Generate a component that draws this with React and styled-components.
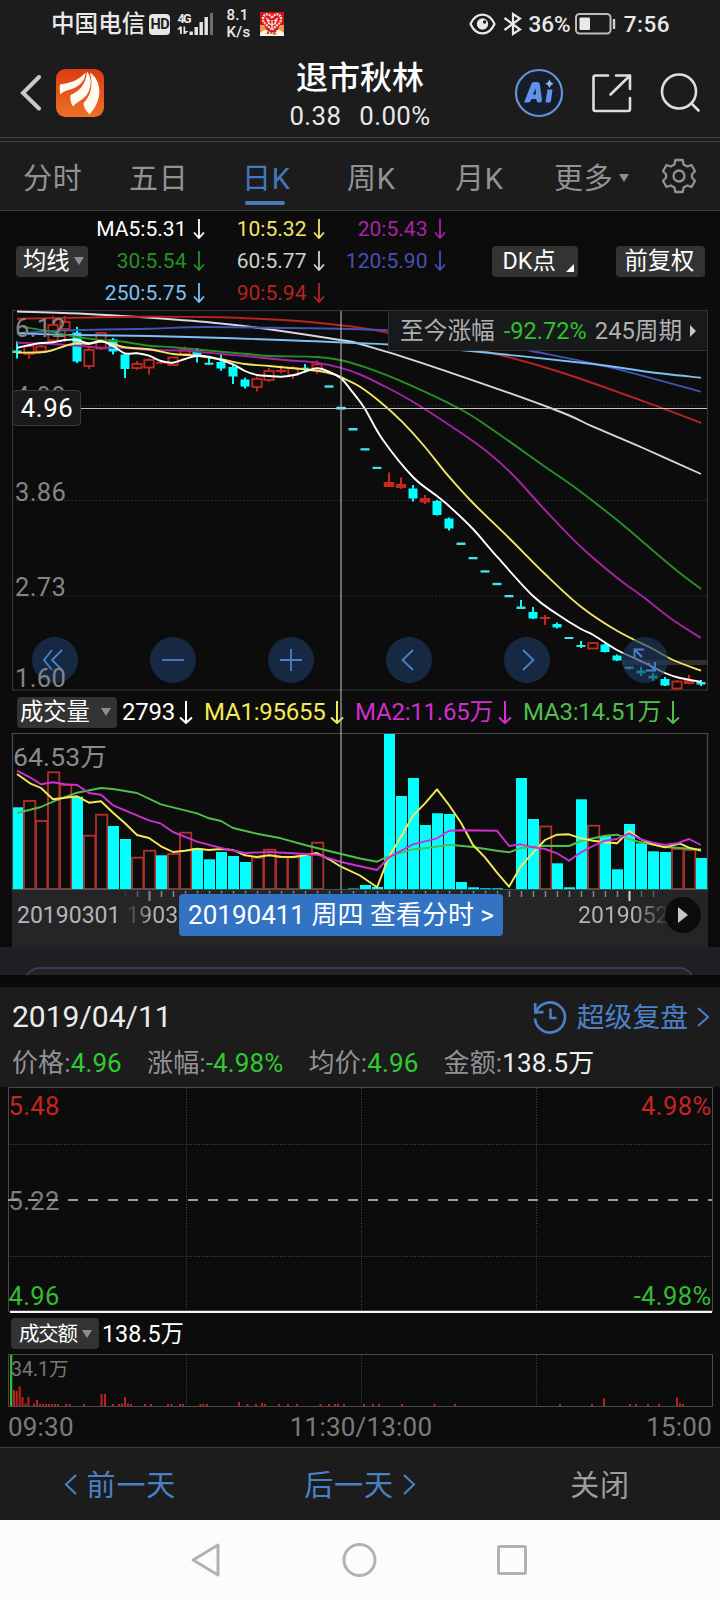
import React from "react";
import styled, { createGlobalStyle } from "styled-components";

const Global = createGlobalStyle`
  * { box-sizing: border-box; }
  body { margin: 0; background: #0c0c0c; }
  #root { width: 720px; }
  svg { display: block; flex: none; }
`;

const BLUE = "#4a80c6";
const GREY = "#929296";

const Page = styled.div`
  width: 720px;
  height: 1600px;
  display: flex;
  flex-direction: column;
  overflow: hidden;
  background: #0c0c0c;
  color: #fff;
  font-family: Roboto, "Noto Sans CJK SC", sans-serif;
  white-space: nowrap;
`;

const StatusBar = styled.div`
  height: 48px;
  padding: 0 50px 0 51px;
  display: flex;
  align-items: center;
  background: #1c1c1c;
  color: #e9e9e9;
`;
const Carrier = styled.span`
  font-size: 23.6px;
  line-height: 30px;
  font-weight: 500;
`;
const HdBadge = styled.span`
  width: 21px;
  height: 21px;
  margin-left: 4px;
  border-radius: 4px;
  background: #e6e6e6;
  color: #1c1c1c;
  font-size: 14.5px;
  line-height: 21.5px;
  font-weight: 700;
  letter-spacing: -0.5px;
  text-align: center;
`;
const Speed = styled.div`
  width: 34px;
  margin-left: 12px;
  font-size: 15px;
  line-height: 17.5px;
  font-weight: 500;
  letter-spacing: 0.4px;
`;
const StatusRight = styled.div`
  margin-left: auto;
  display: flex;
  align-items: center;
  font-size: 22.5px;
  line-height: 28px;
  font-weight: 500;
`;
const Clock = styled.span`
  margin-left: 7px;
  letter-spacing: 0.5px;
`;

const Header = styled.header`
  height: 90px;
  padding: 0 16px 0 20px;
  display: grid;
  grid-template-columns: 210px 1fr 214px;
  background: #1c1c1c;
  border-bottom: 1px solid #414141;
`;
const HeaderLeft = styled.div`
  padding-top: 21px;
  display: flex;
  gap: 14px;
`;
const HeaderRight = styled.div`
  padding-top: 20px;
  display: flex;
  justify-content: flex-end;
`;
const Titles = styled.div`
  padding-top: 12px;
  text-align: center;
`;
const Title = styled.div`
  font-size: 32px;
  line-height: 36px;
  font-weight: 500;
`;
const Quote = styled.div`
  margin-top: 2px;
  display: flex;
  justify-content: center;
  gap: 18px;
  color: #e8e8e8;
  font-size: 25.8px;
  line-height: 36px;
  letter-spacing: 0.4px;
`;

const Tabs = styled.nav`
  height: 73px;
  margin: 0;
  padding: 4px 0 0 23px;
  border-bottom: 1px solid #3c3c3c;
  display: grid;
  grid-template-columns: 106px 113px 105px 108px 99px 107px 40px;
  align-items: stretch;
  background: linear-gradient(#1c1c1c 3px, #414141 3px, #414141 4px, #1c1c1c 4px);
`;
const Tab = styled.div`
  display: flex;
  align-items: flex-start;
  flex-direction: column;
  padding-top: 20px;
  color: ${(p) => (p.$active ? "#4378bd" : GREY)};
  font-size: 29px;
  line-height: 34px;
  letter-spacing: 0.8px;
`;
const TabUnderline = styled.i`
  width: 40px;
  height: 4px;
  margin: 5px 0 0 3px;
  border-radius: 2px;
  background: #4a7ab8;
`;
const MoreTab = styled(Tab)`
  flex-direction: row;
  gap: 5px;
`;
const Caret = styled.i`
  width: 0;
  height: 0;
  flex: none;
  border-left: ${(p) => p.$size || 5}px solid transparent;
  border-right: ${(p) => p.$size || 5}px solid transparent;
  border-top: ${(p) => (p.$size || 5) * 1.7}px solid #8f8f92;
`;

const MaPanel = styled.div`
  height: 99px;
  padding: 1px 15px 0 16px;
  display: flex;
  align-items: center;
`;
const Pill = styled.div`
  width: ${(p) => p.$w}px;
  height: 31px;
  padding-left: ${(p) => p.$pad || 7}px;
  border-radius: 4px;
  display: flex;
  align-items: center;
  gap: ${(p) => p.$gap || 4}px;
  background: #333334;
  font-size: ${(p) => p.$fs || 23.3}px;
  line-height: 30px;
  letter-spacing: ${(p) => p.$ls || 0}px;
`;
const MaButton = styled(Pill)`
  margin: 0 ${(p) => p.$mr || 0}px 0 ${(p) => p.$ml || 0}px;
`;
const CornerMark = styled.i`
  width: 0;
  height: 0;
  align-self: flex-end;
  margin-bottom: 5px;
  border-left: 8px solid transparent;
  border-bottom: 8px solid #fff;
`;
const MaGrid = styled.div`
  display: grid;
  grid-template-columns: 116.5px 120px 121px;
  grid-auto-rows: 32px;
`;
const MaItem = styled.span`
  display: flex;
  align-items: center;
  justify-content: flex-end;
  gap: 6px;
  color: ${(p) => p.$c};
  font-size: 21px;
  letter-spacing: 0.03px;
`;

const ChartStack = styled.section`
  position: relative;
  display: flex;
  flex-direction: column;
`;
const PriceArea = styled.div`
  position: relative;
  height: 381px;
`;
const AxisText = styled.text`
  font-family: Roboto, "Noto Sans CJK SC", sans-serif;
  font-size: ${(p) => p.$fs || 25.5}px;
  letter-spacing: ${(p) => (p.$ls === undefined ? 0.4 : p.$ls)}px;
  fill: ${(p) => p.$c || "#858585"};
`;
const PriceTag = styled.div`
  position: absolute;
  left: 12px;
  top: 80px;
  width: 69px;
  height: 36px;
  border: 1px solid #3b3b3b;
  border-radius: 4px;
  background: #1a1a1b;
  font-size: 25.8px;
  line-height: 35px;
  letter-spacing: 0.6px;
  text-indent: 1px;
  text-align: center;
`;
const SinceBar = styled.div`
  position: absolute;
  right: 12px;
  top: 0;
  width: 320px;
  height: 41px;
  padding: 0 10px 0 11px;
  border: 1px solid #303134;
  display: flex;
  align-items: center;
  background: #18191b;
  color: #b0b0b0;
  font-size: 23.7px;
  line-height: 38px;
`;
const SinceValue = styled.span`
  margin: 0 8px 0 9px;
  color: #31c02f;
  font-size: 23.6px;
`;
const PlayTriangle = styled.i`
  width: 0;
  height: 0;
  margin-left: ${(p) => p.$ml || 0}px;
  border-top: ${(p) => p.$h / 2}px solid transparent;
  border-bottom: ${(p) => p.$h / 2}px solid transparent;
  border-left: ${(p) => p.$w}px solid #c8c8c8;
`;
const Controls = styled.div`
  position: absolute;
  left: 32px;
  right: 51.5px;
  top: 327px;
  display: flex;
  justify-content: space-between;
`;
const RoundButton = styled.div`
  width: 46px;
  height: 46px;
  border-radius: 50%;
  background: rgba(29, 57, 95, 0.65);
`;
const OverLabel = styled.span`
  position: absolute;
  left: 15px;
  top: 360px;
  font-size: 25.5px;
  line-height: 16px;
  letter-spacing: 0.4px;
  color: #858585;
`;
const Crosshair = styled.div`
  position: absolute;
  left: 340px;
  top: 1px;
  width: 2px;
  height: 580px;
  background: rgba(170, 170, 170, 0.6);
`;

const VolumeLegend = styled.div`
  height: 42px;
  padding: 0 0 0 17px;
  display: flex;
  align-items: center;
`;
const LegendValue = styled.span`
  width: ${(p) => p.$w}px;
  margin-left: ${(p) => p.$ml}px;
  display: flex;
  align-items: center;
  justify-content: space-between;
  color: ${(p) => p.$c};
  font-size: 24px;
  line-height: 34px;
  letter-spacing: -0.22px;
`;

const Timeline = styled.div`
  position: relative;
  height: 57px;
  margin: 0 12px;
  background: #252527;
`;
const TimelineDates = styled.div`
  height: 48px;
  padding: 0 6px 0 5px;
  display: flex;
  align-items: center;
  color: #b5b5b5;
  font-size: 23px;
  margin-top: -11px;
`;
const FadedDate = styled.span`
  margin-left: ${(p) => p.$ml}px;
  background: linear-gradient(${(p) => p.$dir}, #b5b5b5 60%, #2c2c2e 100%);
  background-clip: text;
  -webkit-background-clip: text;
  color: transparent;
`;
const PlayButton = styled.div`
  width: 36px;
  height: 36px;
  margin-left: -3.5px;
  flex: none;
  position: relative;
  border-radius: 50%;
  background: #0c0c0c;
  display: flex;
  align-items: center;
  justify-content: center;
`;
const DateTip = styled.div`
  position: absolute;
  left: 167px;
  top: 4px;
  width: 324px;
  height: 42px;
  border-radius: 4px;
  background: #3273c4;
  font-size: 26px;
  line-height: 43px;
  text-align: center;
`;

const Peek = styled.div`
  height: 40px;
  padding: 20px 25px 0 24px;
  border-bottom: 12px solid #0a0a0a;
  overflow: hidden;
  background: #1f1f24;
`;
const PeekCard = styled.div`
  height: 40px;
  border: 2px solid #3a3b56;
  border-radius: 16px;
  background: #222327;
`;

const DayHead = styled.div`
  height: 100px;
  padding: 9px 11px 0 12px;
  background: #1c1c1c;
`;
const DayTop = styled.div`
  height: 41px;
  display: flex;
  align-items: center;
  color: #ececec;
  font-size: 30px;
`;
const Replay = styled.div`
  margin: 1px 0 0 auto;
  display: flex;
  align-items: center;
  color: ${BLUE};
  font-size: 27.8px;
  line-height: 36px;
`;
const ReplayText = styled.span`
  margin: 1px 9px 0 10px;
`;
const Stats = styled.div`
  height: 51px;
  display: flex;
  align-items: center;
  gap: 25.2px;
  color: ${GREY};
  font-size: 26px;
  line-height: 38px;
  letter-spacing: 0.12px;
`;
const StatValue = styled.span`
  color: ${(p) => p.$c};
`;
const AmountLegend = styled.div`
  height: 41px;
  padding: 0 11px;
  display: flex;
  align-items: center;
  gap: 3px;
  font-size: 23.3px;
`;
const AmountTotal = styled.span`
  margin-top: -4px;
`;
const Times = styled.div`
  height: 39px;
  padding: 0 8px 2px 8px;
  display: grid;
  grid-template-columns: 1fr 1fr 1fr;
  align-items: center;
  color: #7b7b7b;
  font-size: 26px;
  letter-spacing: 0.2px;
  & > :nth-child(2) { text-align: center; text-indent: 2px; }
  & > :nth-child(3) { text-align: right; }
`;
const Footer = styled.footer`
  height: 73px;
  padding: 3px 90px 0 65px;
  border-top: 1px solid #3c3c3c;
  display: flex;
  align-items: center;
  background: #1c1c1c;
  color: ${BLUE};
  font-size: 29px;
  line-height: 40px;
  letter-spacing: 0.9px;
`;
const DayLink = styled.span`
  margin-right: ${(p) => p.$mr || 0}px;
  display: flex;
  align-items: center;
  gap: 9.5px;
  & svg { margin-bottom: 3px; }
`;
const CloseLink = styled.span`
  margin-left: auto;
  color: #9d9d9f;
`;
const NavBar = styled.div`
  height: 80px;
  padding: 0 192px 0 191px;
  display: flex;
  align-items: center;
  justify-content: space-between;
  background: #fcfcfc;
`;

const Down = ({ h = 20, w = 12, sw = 1.8 }) => (
  <svg width={w} height={h} viewBox={`0 0 ${w} ${h}`} fill="none" stroke="currentColor" strokeWidth={sw}>
    <path d={`M${w / 2} 0V${h - 1}M1 ${h - 6.5}L${w / 2} ${h - 1}L${w - 1} ${h - 6.5}`} />
  </svg>
);
const Chevron = ({ left, w = 12, h = 21, sw = 2 }) => (
  <svg width={w} height={h} viewBox={`0 0 ${w} ${h}`} fill="none" stroke="currentColor" strokeWidth={sw}>
    <path d={left ? `M${w - 1} 1L1 ${h / 2}L${w - 1} ${h - 1}` : `M1 1L${w - 1} ${h / 2}L1 ${h - 1}`} />
  </svg>
);

const Signal = () => (
  <svg width="25" height="24" viewBox="0 0 25 24" fill="#e6e6e6">
    <rect x="0.5" y="19.5" width="3.4" height="3.5" />
    <rect x="5.5" y="15" width="3.4" height="8" />
    <rect x="10.5" y="10" width="3.4" height="13" />
    <rect x="15.5" y="5" width="3.4" height="18" />
    <rect x="21" y="1" width="3" height="22" fill="#6e6e6e" />
  </svg>
);
const CellBox = styled.div`
  width: 37px;
  height: 24px;
  margin-left: 7px;
  display: flex;
  align-items: flex-start;
`;
const CellText = styled.div`
  width: 12px;
  font-size: 12.5px;
  line-height: 13px;
  font-weight: 700;
  letter-spacing: -1.5px;
`;

const FestivalIcon = () => (
  <svg width="24" height="24" viewBox="0 0 24 24">
    <rect width="24" height="24" fill="#d4141c" />
    <path d="M0 15L5 17L12 21L19 17L24 15V24H0Z" fill="#fff3e4" />
    <path d="M0 13L4 13L6 17L0 21ZM24 13L20 13L18 17L24 21Z" fill="#ef9a45" />
    <path d="M12 6C10 1 3 1 3 7c0 5 6 7 9 11c3-4 9-6 9-11c0-6-7-6-9-1Z" fill="none" stroke="#fbd9d3" strokeWidth="2.4" strokeDasharray="2 .8" />
    <path d="M6 6l4 3M18 6l-4 3M8 11l4 2l4-2M12 8v8M7 8l2 3M17 8l-2 3" stroke="#fbd9d3" strokeWidth="1.4" />
    <path d="M7 22l1.5-3v3M11 19v3M13.5 19.5h2l-2 2.5h3" stroke="#a34b2a" strokeWidth="1.2" fill="none" />
  </svg>
);
const EyeIcon = () => (
  <svg width="27" height="22" viewBox="0 0 27 22" fill="none" stroke="#e9e9e9" strokeWidth="2.2">
    <path d="M1.5 11C7 -1.5 20 -1.5 25.5 11C20 23.5 7 23.5 1.5 11Z" />
    <circle cx="13.5" cy="11" r="5.7" fill="#e9e9e9" stroke="none" />
    <circle cx="15.6" cy="9" r="1.7" fill="#1c1c1c" stroke="none" />
  </svg>
);
const BluetoothIcon = () => (
  <svg width="20" height="24" viewBox="0 0 20 24" fill="none" stroke="#e9e9e9" strokeWidth="2.2">
    <path d="M1.5 6L17 17.5L10 22V2L17 6.5L1.5 18" />
  </svg>
);
const BatteryIcon = () => (
  <svg width="42" height="22" viewBox="0 0 42 22" fill="none">
    <rect x="1" y="1" width="34.5" height="19.5" rx="3.5" stroke="#bdbdbd" strokeWidth="2" />
    <rect x="4.5" y="4.5" width="10.5" height="12.5" rx="1" fill="#e9e9e9" />
    <path d="M39 6V16" stroke="#d0d0d0" strokeWidth="2.4" />
  </svg>
);
const BackIcon = () => (
  <svg width="22" height="48" viewBox="0 0 22 48" fill="none" stroke="#cacaca" strokeWidth="4" strokeLinecap="round">
    <path d="M19 8L3 24L19 39.5" />
  </svg>
);
const BrandIcon = () => (
  <svg width="48" height="48" viewBox="0 0 48 48">
    <defs>
      <linearGradient id="brand" x1="0" y1="0" x2="0" y2="1">
        <stop offset="0" stopColor="#de3c12" />
        <stop offset="1" stopColor="#ec7125" />
      </linearGradient>
    </defs>
    <rect width="48" height="48" rx="9.5" fill="url(#brand)" />
    <g fill="#fff9f0">
      <path d="M4 15.5C13 14.5 23 11.5 29.5 3.5C29.5 12 23 18 14 20.5C9.5 21.7 6.5 23 4.5 25.5C3.5 22 3.5 19 4 15.5Z" />
      <path d="M14.5 26C23.5 22.5 30 15 31 2.5C36.5 9 35.5 19 31 25.5C27 31 21 32.5 17 37.5C14.5 34 14 30 14.5 26Z" />
      <path d="M27.5 34C34.5 27 37.5 17 34 3.5C42 9 44.5 19 43 27C41.5 35 37.5 41 33.5 45.5C30 42 27.5 38 27.5 34Z" />
    </g>
  </svg>
);
const AiIcon = () => (
  <svg width="50" height="50" viewBox="0 0 50 50">
    <circle cx="25" cy="25" r="23" fill="#161c28" stroke="#6791d8" strokeWidth="2.2" />
    <path fillRule="evenodd" fill="#5f92ea" d="M10 34.5L17.5 15.5Q18.2 14 20 14H23Q25.5 14 25.8 16L28 32Q28.2 34.5 26 34.5H24.5Q22.8 34.5 22.6 32.8L22.3 31H17.5L16.7 32.8Q16 34.5 14 34.5ZM19 26.5H22L21.5 20.5Z" />
    <path fill="#5f92ea" d="M33.5 21.5H38.5L37 33Q36.8 34.5 35 34.5H31.5Z" />
    <path fill="#8fb4f2" d="M35.5 11.5Q36.5 15 39.5 15.8Q36.5 16.6 35.5 20Q34.5 16.6 31.5 15.8Q34.5 15 35.5 11.5Z" />
  </svg>
);
const ShareIcon = () => (
  <svg width="50" height="50" viewBox="0 0 50 50" fill="none" stroke="#dedede" strokeWidth="2.6" strokeLinecap="round" strokeLinejoin="round">
    <path d="M22 7.5H9.5Q7.5 7.5 7.5 9.5V41Q7.5 43 9.5 43H42Q44 43 44 41V30M30 7.5H44V21M44 7.5L24.5 26.5" />
  </svg>
);
const SearchIcon = () => (
  <svg width="50" height="50" viewBox="0 0 50 50" fill="none" stroke="#dedede" strokeWidth="2.6" strokeLinecap="round">
    <circle cx="25" cy="23.5" r="17" />
    <path d="M37.5 35.5L44.5 42.5" />
  </svg>
);
const GearIcon = () => (
  <svg width="36" height="36" viewBox="0 0 36 36" fill="none" stroke={GREY} strokeWidth="2.3" strokeLinejoin="round">
    <path d="M14.3 2H21.7L22.6 6.5L26.2 8.5L30.5 7L34 13.3L31 16.3V19.7L34 22.7L30.5 29L26.2 27.5L22.6 29.5L21.7 34H14.3L13.4 29.5L9.8 27.5L5.5 29L2 22.7L5 19.7V16.3L2 13.3L5.5 7L9.8 8.5L13.4 6.5Z" />
    <circle cx="18" cy="18" r="5.5" />
  </svg>
);
const GearSlot = styled.div`
  padding-top: 16px;
`;
const CaretSlot = styled.span`
  height: 34px;
  display: flex;
  align-items: center;
  padding-bottom: 3px;
`;
const IconGap = styled.span`
  width: ${(p) => p.$w}px;
  flex: none;
`;
const HistoryIcon = () => (
  <svg width="34" height="34" viewBox="0 0 34 34" fill="none" stroke={BLUE} strokeWidth="2.7">
    <path d="M2.5 13.5A15 15 0 1 1 2 18.5" />
    <path d="M2.2 3V12.2H10.5" />
    <path d="M17.5 8.5V18H23.5" strokeWidth="2.5" />
  </svg>
);

const CX = (i) => 17 + 12 * i;
// Candles: [colour, high, open/close top, open/close bottom, low, hollow]
const candles = [
  ["c", 341.5, 350.5, 353, 358.5], ["r", 346, 346, 354, 359, 1], ["r", 345, 346.5, 351.5, 353, 1], ["r", 316, 325, 340.5, 342, 1],
  ["r", 316, 322, 329, 342, 1], ["c", 326.7, 332.5, 361.5, 363], ["r", 346, 350, 366, 369, 1], ["r", 333, 333, 348.5, 350, 1],
  ["c", 338, 339.5, 351.5, 354.5], ["c", 353.5, 354.5, 369, 378], ["r", 361, 364, 368, 370, 1], ["r", 358, 360, 367.5, 374.5, 1],
  ["r", 360.5, 362, 363.5, 364], ["r", 357.5, 357.5, 365, 365, 1], ["r", 346.5, 350, 354, 356, 1], ["c", 348, 350.5, 356.5, 362.5],
  ["c", 357.5, 362.7, 364.7, 364.7], ["c", 352.7, 362, 368.5, 370.7], ["c", 364, 367, 376.5, 384], ["c", 377.7, 379.5, 386.5, 388.5],
  ["r", 376.5, 379, 387, 391.5, 1], ["r", 368, 371, 380, 382, 1], ["r", 365.5, 370, 372, 373.5], ["r", 366, 368, 375, 379, 1],
  ["c", 364, 367.7, 370, 372.5], ["r", 360.5, 364.5, 371, 374, 1], ["c", 385.3, 385.3, 387.7, 387.7], ["c", 407, 407, 409.5, 409.5],
  ["c", 428, 428, 430.5, 430.5], ["c", 448.2, 448.2, 450.5, 450.5], ["c", 466.8, 466.8, 469, 469], ["r", 472.5, 482, 487, 487],
  ["r", 477.5, 484, 488, 489], ["c", 485, 488.5, 498.5, 501.5], ["r", 495, 498, 502.5, 504], ["c", 500, 501, 515, 515.5],
  ["c", 517.5, 518.5, 528.5, 530.5], ["c", 542.5, 542.5, 545, 545], ["c", 557, 557, 559.3, 559.3], ["c", 570.3, 570.3, 572.6, 572.6],
  ["c", 582.8, 582.8, 585.2, 585.2], ["c", 595, 595, 597.3, 597.3], ["c", 600, 606.5, 609, 609], ["c", 607, 612, 618.5, 619],
  ["r", 615, 617, 619, 625], ["c", 622.5, 624, 627.5, 628.5], ["c", 637, 637, 639, 639], ["c", 641, 645, 647, 648],
  ["r", 642, 643, 648.5, 649, 1], ["c", 643.5, 644.5, 652, 652.5], ["c", 654.5, 655.5, 660.5, 661], ["c", 666, 666.5, 669, 669.5],
  ["c", 666.5, 670.5, 673.5, 676], ["c", 673, 675.5, 678.5, 680.5], ["c", 677, 679, 685.5, 686], ["r", 680, 681.5, 688.5, 690, 1],
  ["r", 675, 680, 684, 684], ["c", 680, 682, 684.5, 686],
];
const maLines = [
  ["#d8d8d8", "17,311.5 83,313.7 143,317.3 213,322.7 260,328 340,340 360,344 423,363.3 553,409 593,426.7 643,448 701,474"],
  ["#b82320", "17,318.7 77,317.7 143,316.7 220,317.3 283,320 320,323 360,327.7 388,332.7 483,351 560,372 660,407.3 701,423"],
  ["#4452b4", "17,333 77,330 150,328.7 205,327 290,328 360,329.3 430,333 480,340 527,350 607,366.7 701,391.7"],
  ["#7cc0f4", "17,333.3 77,335 150,336 233,338.3 300,340.7 360,343.3 388,344.5 463,350.3 593,364 647,371.7 701,377.7"],
  ["#269029", "23,327 53,332 77,337 101,340 125,342 149,345.7 173,347.3 221,351.7 247,354 269,356 317,357 340,360 360,365.5 400,380.7 460,409 490,428 545,466.7 577,489 617,520 643,542 677,570.7 701,589"],
  ["#a723a6", "17,342.7 53,344 77,345.7 101,347.7 125,348 149,350 185,350.7 221,354 245,356 269,358.5 293,360.7 317,362.7 340,367.7 360,374.5 385,386.5 410,400 450,425.5 485,450 513,475 545,510 581,547 617,577.7 643,596.7 670,618 701,638"],
  ["#f5e565", "17,352.7 41,352.3 53,350 65,346 77,343.3 89,344 101,341.7 113,344 125,347.3 149,349.3 173,354 197,355.7 221,359.3 245,364 269,366 293,368.3 317,370.7 333,374 347,380 360,386.7 380,401.7 402,421.7 425,447 449,476.7 473,503 509,538 545,574 581,606.7 617,630.7 653,649 673,660 701,670.7"],
  ["#ffffff", "17,347.7 30,345 41,343 53,342.3 65,340 77,340 89,343.3 101,341 113,346 125,353.3 137,353.3 149,355.7 161,361 173,362.7 185,359 197,355.7 209,356.7 221,360 233,364.3 245,371 257,375 269,376 281,376.7 293,375.3 305,371.7 317,368.3 329,371.7 341,378.3 353,392.7 365,409 383,440 413,477 437,496 449,506 473,529 497,556.7 533,596 557,614 581,629 593,634.7 617,650 643,662 665,673 680,678 701,681.7"],
];

// Catmull-Rom curve through a "x,y x,y ..." list
const smooth = (pts) => {
  const p = pts.split(" ").map((s) => s.split(",").map(Number));
  const r = (v) => Math.round(v * 10) / 10;
  return p.slice(1).reduce((d, b, k) => {
    const a = p[k];
    const before = p[k - 1] || a;
    const after = p[k + 2] || b;
    const c1 = [a[0] + (b[0] - before[0]) / 6, a[1] + (b[1] - before[1]) / 6];
    const c2 = [b[0] - (after[0] - a[0]) / 6, b[1] - (after[1] - a[1]) / 6];
    return `${d}C${r(c1[0])} ${r(c1[1])} ${r(c2[0])} ${r(c2[1])} ${b[0]} ${b[1]}`;
  }, `M${p[0][0]} ${p[0][1]}`);
};

// Volume bars: [colour, top y]
const volumes = "c807.3 r801 r821 r772.3 r785 c796.7 r835.7 r814.7 c826 c839 r857.7 r850.7 c855.3 r854 r832.7 c848.3 c859.3 c852 c856 c862 r857.7 r849.7 r857.3 r857.3 c856 r842.7 n889 c889 c888.5 c885 c887 c734 c796 c778 c825 c813.3 c814 c882 c887.3 c888.3 c888.3 c889 c778 c819 r826.5 c863.3 c887.3 c799.3 r825.7 c836 c869.3 c824 c843.3 c851.3 c852 r849 r850 c858"
  .split(" ")
  .map((s) => [s[0], Number(s.slice(1))]);
const volLines = [
  ["#4fbf4c", "17,813 41,807 53,801.7 77,792.7 101,788 113,789 137,793 161,804.3 197,813.3 209,818.3 221,821 233,828 257,833.7 281,838.3 305,845 329,851 360,858.5 377,861.7 389,856 413,849.3 425,848.3 449,844.7 473,847 497,850.7 509,852.3 521,848 545,845.7 569,846 581,841 605,835.7 617,834.7 629,839 641,842.3 665,847 701,849.5"],
  ["#f6e956", "17,774 30,783.3 41,788 53,799.3 65,797.7 77,796.3 89,802.7 101,801.3 113,812.7 125,823.3 137,835 149,838 161,846.3 173,852 185,850.7 197,848.7 209,850 221,849 233,850 245,855.3 257,857 269,855.3 281,856.7 293,857 305,855.3 317,853 329,859.3 341,866.7 360,875.5 377,887.3 389,856.7 401,836.7 413,815.7 425,803.3 437,789.3 449,805 461,822.7 473,845 485,857.3 497,872.7 509,886.7 521,866 533,852.7 545,840 557,834.7 569,834.3 581,838.3 593,840.7 605,842.3 617,843.3 629,831 641,839.3 653,844.3 665,847.3 680,843.7 689,847.7 701,850.7"],
  ["#cf2fce", "17,770.7 30,777.3 41,784.3 53,782.3 65,784.3 77,785 89,793 101,794.7 113,805.3 125,810.3 137,815.3 149,820.3 161,823.7 173,832 197,841.7 221,848 245,853 269,852 293,853.3 317,854.7 341,862 360,866.3 377,870 389,857.3 413,844.3 437,838.3 449,830.7 461,830.3 497,830.7 509,846 521,844.3 533,847.3 545,849 557,853.3 569,860.7 581,852.3 593,846 605,840.7 617,839 629,833.3 641,839.3 653,842.7 665,845 677,843.3 689,839 701,845"],
];

// Intraday amount bars: [x, height]
const amounts = [
  [14, 16], [16.7, 15], [19.7, 19.5], [22.5, 9], [25.5, 2.5], [28.5, 9], [34, 2.5], [37, 6], [40, 2], [43, 2], [46, 2], [49, 2], [52, 2], [55, 2], [58, 2],
  [66, 2], [69.5, 2], [84, 2], [101.5, 12], [105, 12], [113, 2], [119, 2], [122, 2.5], [125, 9], [128, 2.5], [131, 2], [145, 2], [151, 2], [168, 2], [171.5, 2],
  [180, 2], [183, 2], [200.5, 2], [203.5, 2], [207, 2], [239, 4], [247.5, 2], [256, 2], [262, 3], [265, 2], [279, 2], [288, 2], [297, 2], [320.5, 2], [329, 2],
  [335, 2], [338, 2], [344, 2], [364, 2], [373, 2], [379, 2], [402, 2], [434.5, 2], [455, 2], [560, 2], [592, 2], [604, 7.5], [630, 2], [636, 2], [648, 2], [659, 2],
  [677, 8.5], [680, 2.5], [683, 2],
];

const PriceChart = () => (
  <svg width="720" height="381" viewBox="0 310 720 381">
    <g stroke="#333" strokeDasharray="1.5 2">
      <path d="M12 405.5H707M12 500.5H707M12 596H707" />
    </g>
    <rect x="12.5" y="310.5" width="695" height="379.5" fill="none" stroke="#333436" strokeWidth="1.2" />
    <path d="M622 662.5H707" stroke="#303030" strokeWidth="5" />
    {candles.map(([c, hi, top, bot, lo, hollow], i) => {
      const col = c === "c" ? "#00ffff" : "#c5281f";
      const dash = c === "c" && bot - top < 2.6;
      return (
        <g key={i} stroke={col} fill={dash ? "#3fe3e8" : col}>
          {hollow ? (
            <>
              <path d={`M${CX(i)} ${hi}V${top}M${CX(i)} ${bot}V${lo}`} strokeWidth="1.8" />
              <rect x={CX(i) - 4.7} y={top} width="9.4" height={bot - top} fill="none" strokeWidth="1.8" />
            </>
          ) : (
            <>
              {lo - hi > 2.6 && <path d={`M${CX(i)} ${hi}V${lo}`} strokeWidth="2" />}
              <rect x={CX(i) - (c === "c" ? 4.5 : 5.2)} y={top} width={c === "c" ? 9 : 10.5} height={bot - top} stroke="none" />
            </>
          )}
        </g>
      );
    })}
    {maLines.map(([c, pts]) => (
      <path key={c} d={smooth(pts)} fill="none" stroke={c} strokeWidth="1.9" strokeLinejoin="round" />
    ))}
    <path d="M80 408.5H707" stroke="#c4c4c4" strokeWidth="1.2" />
    <path d="M336.5 408H345.5" stroke="#6fe8ea" strokeWidth="2.4" />
    <AxisText x="15" y="337">6.12</AxisText>
    <AxisText x="15" y="405">4.99</AxisText>
    <AxisText x="15" y="501">3.86</AxisText>
    <AxisText x="15" y="596">2.73</AxisText>
  </svg>
);

const VolumeChart = () => (
  <svg width="720" height="157" viewBox="0 733 720 157">
    {volumes.map(([c, y], i) =>
      c === "c" ? (
        <rect key={i} x={i ? CX(i) - 5 : 13} y={y} width={i ? 11 : 10} height={889.5 - y} fill="#00ffff" />
      ) : c === "r" ? (
        <rect key={i} x={CX(i) - 5} y={y} width="11.3" height={889 - y} fill="none" stroke="#b0322d" strokeWidth="1.8" />
      ) : null
    )}
    <path d="M12.5 890V733.5H707.5V890" fill="none" stroke="#4c4c4e" strokeWidth="1.2" />
    <path d="M13 889.5H707" stroke="#2d5f60" strokeWidth="1" />
    {volLines.map(([c, pts]) => (
      <polyline key={c} points={pts} fill="none" stroke={c} strokeWidth="1.9" strokeLinejoin="round" />
    ))}
    <AxisText x="13" y="765.5" $fs={26.5} $ls={0.15} $c="#8a8a8a">64.53万</AxisText>
  </svg>
);

const Ticks = () => (
  <svg width="696" height="12" viewBox="12 890 696 12" stroke="#8a8a8a">
    {Array.from({ length: 45 }, (_, k) => 125 + 12 * k).map((x) => {
      const major = x === 149 || x === 629;
      return (
        <path
          key={x}
          d={`M${x + 0.5} 891V${major ? 901 : x > 175 && x < 505 ? 893.5 : 897}`}
          stroke={x === 629 ? "#d8d8d8" : undefined}
          strokeWidth={major ? 2 : 1.5}
          opacity={x === 125 ? 0.2 : x === 137 || x > 640 ? 0.6 : 1}
        />
      );
    })}
  </svg>
);

const IntradayChart = () => (
  <svg width="720" height="226" viewBox="0 1087 720 226">
    <g stroke="#4c4c4c" strokeDasharray="1 1.7">
      <path d="M10 1144.5H712M10 1256.5H712M186.5 1088V1310M361.5 1088V1310M536.5 1088V1310" />
    </g>
    <path d="M8.5 1312V1087.5H712.5V1312" fill="none" stroke="#4a4a4a" />
    <AxisText x="8.5" y="1210" $c="#7d7d7d">5.22</AxisText>
    <path d="M8 1200H712" stroke="#9b9b9b" strokeWidth="2" strokeDasharray="10 10" />
    <path d="M10 1311.8H712" stroke="#f4f4f0" strokeWidth="2.2" />
    <AxisText x="8.5" y="1115" $c="#c42520">5.48</AxisText>
    <AxisText x="8.5" y="1305" $c="#31bd33">4.96</AxisText>
    <AxisText x="711.5" y="1115" textAnchor="end" $c="#c42520">4.98%</AxisText>
    <AxisText x="711.5" y="1305" textAnchor="end" $c="#31bd33">-4.98%</AxisText>
  </svg>
);

const AmountChart = () => (
  <svg width="720" height="54" viewBox="0 1354 720 54">
    <path d="M186.5 1355V1406M361.5 1355V1406M536.5 1355V1406" stroke="#4c4c4c" strokeDasharray="1 1.7" />
    <rect x="8.5" y="1354.5" width="704" height="52" fill="none" stroke="#4a4a4a" />
    {amounts.map(([x, h]) => (
      <rect key={x} x={x - 1} y={1406 - h} width="2" height={h} fill="#bd211d" />
    ))}
    <rect x="10" y="1355" width="2.3" height="51" fill="#38b636" />
    <AxisText x="11" y="1376" $fs={19.5} $ls={0} $c="#797979">34.1万</AxisText>
  </svg>
);

const controlPaths = [
  "M20 13L12 23L20 33M30 13L20 23L30 33",
  "M12 23H34",
  "M12 23H34M23 12V34",
  "M27 13L16.5 23L27 33",
  "M19 13L29.5 23L19 33",
  "M22 12.5H12.5V21M12.5 12.5L20 20M24 33.5H33V25M33 33.5L26 26",
];

const legend = [
  ["#ffffff", "MA5:5.31"], ["#f5e565", "10:5.32"], ["#a723a6", "20:5.43"],
  ["#269029", "30:5.54"], ["#d0d0d0", "60:5.77"], ["#4452b4", "120:5.90"],
  ["#7cc0f4", "250:5.75"], ["#b82320", "90:5.94"],
];
const volumeLegend = [
  ["#ffffff", "2793", 71, 5], ["#f6e956", "MA1:95655", 140, 11],
  ["#cf2fce", "MA2:11.65万", 157, 11], ["#4fbf4c", "MA3:14.51万", 157, 11],
];
const stats = [
  ["价格", "4.96", "#31c933"], ["涨幅", "-4.98%", "#31c933"],
  ["均价", "4.96", "#31c933"], ["金额", "138.5万", "#f0f0f0"],
];

export default function App() {
  return (
    <Page>
      <Global />
      <StatusBar>
        <Carrier>中国电信</Carrier>
        <HdBadge>HD</HdBadge>
        <CellBox>
          <div>
            <CellText>4G</CellText>
            <svg width="12" height="10" viewBox="0 0 12 10" fill="#e6e6e6">
              <path d="M0 4.5L3 1.5H4.8V9H3V4.5ZM6.5 1.5H8.2V6H11.5L8 9H6.5Z" />
            </svg>
          </div>
          <Signal />
        </CellBox>
        <Speed>8.1<br />K/s</Speed>
        <FestivalIcon />
        <StatusRight>
          <EyeIcon />
          <IconGap $w={7} />
          <BluetoothIcon />
          <IconGap $w={6} />
          36%
          <IconGap $w={4} />
          <BatteryIcon />
          <Clock>7:56</Clock>
        </StatusRight>
      </StatusBar>

      <Header>
        <HeaderLeft><BackIcon /><BrandIcon /></HeaderLeft>
        <Titles>
          <Title>退市秋林</Title>
          <Quote><span>0.38</span><span>0.00%</span></Quote>
        </Titles>
        <HeaderRight>
          <AiIcon /><IconGap $w={21.5} /><ShareIcon /><IconGap $w={18.5} /><SearchIcon />
        </HeaderRight>
      </Header>

      <Tabs>
        <Tab>分时</Tab>
        <Tab>五日</Tab>
        <Tab $active>日K<TabUnderline /></Tab>
        <Tab>周K</Tab>
        <Tab>月K</Tab>
        <MoreTab>更多<CaretSlot><Caret /></CaretSlot></MoreTab>
        <GearSlot><GearIcon /></GearSlot>
      </Tabs>

      <MaPanel>
        <MaButton $w={72}>均线<Caret /></MaButton>
        <MaGrid>
          {legend.map(([c, t]) => <MaItem key={t} $c={c}>{t}<Down /></MaItem>)}
        </MaGrid>
        <MaButton $w={86} $ml={46} $pad={11} $gap={10}>DK点<CornerMark /></MaButton>
        <MaButton $w={89} $ml={38} $pad={9}>前复权</MaButton>
      </MaPanel>

      <ChartStack>
        <PriceArea>
          <PriceChart />
          <Controls>
            {controlPaths.map((d) => (
              <RoundButton key={d}>
                <svg width="46" height="46" viewBox="0 0 46 46" fill="none" stroke={BLUE} strokeWidth="1.8"><path d={d} /></svg>
              </RoundButton>
            ))}
          </Controls>
          <OverLabel>1.60</OverLabel>
          <PriceTag>4.96</PriceTag>
          <SinceBar>
            至今涨幅<SinceValue>-92.72%</SinceValue>245周期<PlayTriangle $w={6} $h={12} $ml={8} />
          </SinceBar>
        </PriceArea>
        <VolumeLegend>
          <Pill $w={100} $pad={3} $gap={11}>成交量<Caret /></Pill>
          {volumeLegend.map(([c, t, w, ml]) => (
            <LegendValue key={t} $c={c} $w={w} $ml={ml}>{t}<Down w={14} h={23} sw={2} /></LegendValue>
          ))}
        </VolumeLegend>
        <VolumeChart />
        <Crosshair />
        <Timeline>
          <Ticks />
          <TimelineDates>
            20190301
            <FadedDate $ml={6} $dir="to left">19031</FadedDate>
            <FadedDate $ml={387} $dir="to right">2019052</FadedDate>
            <PlayButton><PlayTriangle $w={10} $h={17} /></PlayButton>
          </TimelineDates>
          <DateTip>20190411 周四 查看分时 &gt;</DateTip>
        </Timeline>
      </ChartStack>

      <Peek><PeekCard /></Peek>

      <DayHead>
        <DayTop>
          2019/04/11
          <Replay><HistoryIcon /><ReplayText>超级复盘</ReplayText><Chevron w={12} h={20} /></Replay>
        </DayTop>
        <Stats>
          {stats.map(([k, v, c]) => <span key={k}>{k}:<StatValue $c={c}>{v}</StatValue></span>)}
        </Stats>
      </DayHead>
      <IntradayChart />
      <AmountLegend>
        <Pill $w={88} $pad={8} $gap={5} $fs={20.5} $ls={-1.3}>成交额<Caret /></Pill>
        <AmountTotal>138.5万</AmountTotal>
      </AmountLegend>
      <AmountChart />
      <Times><span>09:30</span><span>11:30/13:00</span><span>15:00</span></Times>

      <Footer>
        <DayLink $mr={128}><Chevron left /><span>前一天</span></DayLink>
        <DayLink><span>后一天</span><Chevron /></DayLink>
        <CloseLink>关闭</CloseLink>
      </Footer>
      <NavBar>
        <svg width="30" height="36" viewBox="0 0 30 36" fill="none" stroke="#b2b2b2" strokeWidth="3" strokeLinejoin="round">
          <path d="M2 18L27 3V33Z" />
        </svg>
        <svg width="36" height="36" viewBox="0 0 36 36" fill="none" stroke="#b2b2b2" strokeWidth="3"><circle cx="18.5" cy="18" r="15.5" /></svg>
        <svg width="32" height="32" viewBox="0 0 32 32" fill="none" stroke="#b2b2b2" strokeWidth="3"><rect x="2.5" y="2.5" width="27" height="27" rx="1" /></svg>
      </NavBar>
    </Page>
  );
}
